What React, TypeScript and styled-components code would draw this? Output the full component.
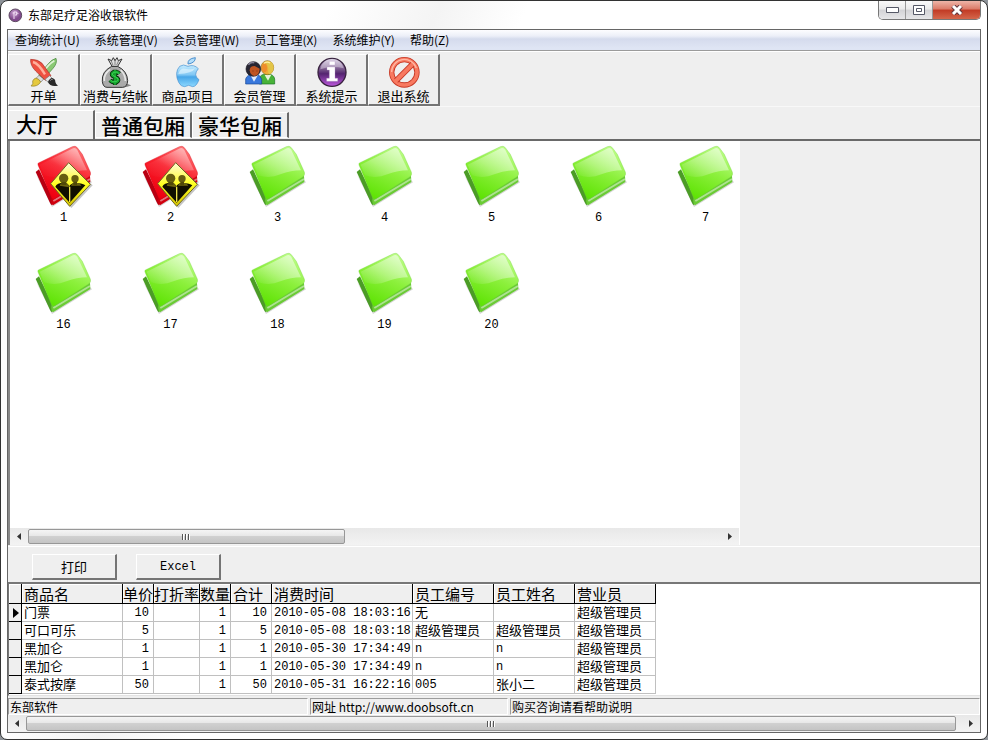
import React, { useState } from 'react';
import styled, { createGlobalStyle, css } from 'styled-components';

const sans = '"Noto Sans CJK SC", sans-serif';
const mono = '"Liberation Mono", "Noto Sans CJK SC", monospace';
const face = '#efefef';

const GlobalStyle = createGlobalStyle`
  * { box-sizing: border-box; }
  html, body { margin: 0; background: #8d9298; }
  body, button, table { font: 12px/16px ${sans}; color: #000; }
  button { padding: 0; margin: 0; border: 0; background: none; }
  svg { display: block; flex: none; }
`;

const Window = styled.div`
  display: flex;
  flex-direction: column;
  min-height: 100vh;
  padding: 0 6px 6px;
  border: 1px solid #333;
  border-radius: 8px 8px 7px 7px;
  background: linear-gradient(115deg, #fff 0 300px, #f4f4f4 400px, #fff 480px);
`;

const TitleBar = styled.header`
  display: flex;
  align-items: center;
  gap: 5px;
  height: 28px;
  padding-left: 1px;
`;

const Title = styled.h1`
  flex: 1;
  margin: 0;
  font-size: 12px;
  font-weight: 400;
`;

const Controls = styled.div`
  display: flex;
  align-self: flex-start;
  height: 19px;
  border: 1px solid #777;
  border-top: 0;
  border-radius: 0 0 5px 5px;
  overflow: hidden;
`;

const ControlButton = styled.button<{ $close?: boolean }>`
  display: flex;
  align-items: center;
  justify-content: center;
  width: ${p => (p.$close ? 47 : 27)}px;
  border-right: ${p => (p.$close ? 0 : '1px solid #999')};
  background: ${p =>
    p.$close
      ? 'linear-gradient(#eeb5a8, #db7a68 45%, #c13a24 50%, #d4674c)'
      : 'linear-gradient(#fafafa, #eaeaea 45%, #d3d3d6 50%, #e6e6e8)'};
`;

const Client = styled.div`
  flex: 1;
  display: flex;
  flex-direction: column;
  border: 1px solid #666;
  background: ${face};
`;

const MenuBar = styled.nav`
  display: flex;
  gap: 15px;
  height: 21px;
  padding-left: 7px;
  border-bottom: 1px solid #9b9b9b;
  background: linear-gradient(#fdfdff, #eceff8 30%, #d5dbed 45%, #dfe5f4 90%);
`;

const MenuItem = styled.button`
  white-space: nowrap;
`;

const ToolBar = styled.div`
  display: flex;
  height: 56px;
  padding-top: 1px;
  border-top: 1px solid #fff;
  border-bottom: 1px solid #f8f8f8;
`;

const ToolButton = styled.button`
  display: flex;
  flex-direction: column;
  align-items: center;
  justify-content: flex-end;
  width: 72px;
  margin-top: 1px;
  border: 1px solid #fff;
  border-right: 2px solid #747474;
  border-bottom: 2px solid #747474;
  font-size: 13px;
  line-height: 16px;
  white-space: nowrap;
`;

const Tabs = styled.div`
  display: flex;
  align-items: flex-end;
  height: 34px;
  padding-top: 3px;
  border-bottom: 2px solid #696969;
`;

const Tab = styled.button<{ $active: boolean }>`
  height: ${p => (p.$active ? 29 : 26)}px;
  padding: 0 ${p => (p.$active ? 35 : 5)}px 0 ${p => (p.$active ? 7 : 5)}px;
  border-left: 1px solid #fff;
  border-top: 1px solid #fff;
  border-right: 2px solid #696969;
  font-size: 21px;
  font-weight: 500;
  line-height: ${p => (p.$active ? 24 : 22)}px;
  white-space: nowrap;
  ${p => p.$active && css`padding-bottom: 4px;`}
  ${p => !p.$active && css`border-bottom: 1px solid #fff; margin-bottom: 1px;`}
`;

const Workspace = styled.main`
  flex: 1;
  display: grid;
  grid-template-columns: minmax(0, 1fr) 240px;
  border-bottom: 1px solid #fff;
`;

const RoomList = styled.section`
  display: flex;
  flex-direction: column;
  margin-bottom: 1px;
  border-left: 2px solid #8a8a8a;
  border-right: 1px solid #fff;
  background: #fff;
`;

const Rooms = styled.div`
  flex: 1;
  display: flex;
  flex-direction: column;
  overflow: hidden;
`;

const RoomRow = styled.div`
  display: flex;
  height: 107px;
  padding-top: 4px;
`;

const Room = styled.button`
  display: flex;
  flex: none;
  flex-direction: column;
  align-items: center;
  gap: 1px;
  width: 107px;
  font: 12px/16px ${mono};
`;

const ScrollBar = styled.div`
  display: flex;
  height: 17px;
  background: linear-gradient(#e8e8e8, #f3f3f3);
`;

const Arrow = styled.button`
  display: flex;
  align-items: center;
  justify-content: center;
  width: 18px;
`;

const Thumb = styled.div<{ $share: number }>`
  display: flex;
  flex: ${p => p.$share};
  align-items: center;
  justify-content: center;
  margin: 1px 0;
  border: 1px solid #979797;
  border-radius: 2px;
  background: linear-gradient(#f5f5f5, #e7e7e7 45%, #d0d0d0 50%, #c4c4c4);
`;

const Track = styled.div<{ $share: number }>`
  flex: ${p => p.$share};
`;

const Actions = styled.div`
  display: flex;
  gap: 19px;
  height: 35px;
  padding: 7px 24px 2px;
`;

const ActionButton = styled.button<{ $mono?: boolean }>`
  width: 85px;
  border: 1px solid #fff;
  border-right: 2px solid #747474;
  border-bottom: 2px solid #747474;
  font-family: ${p => (p.$mono ? mono : sans)};
  font-size: ${p => (p.$mono ? 12 : 13)}px;
`;

const GridPanel = styled.section`
  height: 114px;
  border-top: 2px solid #777;
  border-left: 1px solid #777;
  border-bottom: 1px solid #e3e3e3;
  background: #fff;
  overflow: hidden;
`;

const Grid = styled.table`
  width: 647px;
  table-layout: fixed;
  border-collapse: separate;
  border-spacing: 0;
`;

const Col = styled.col<{ $w: number }>`
  width: ${p => p.$w}px;
`;

const HeadCell = styled.th<{ $tight?: boolean }>`
  height: 20px;
  padding: 0 0 0 ${p => (p.$tight ? 0 : 2)}px;
  border-right: 1px solid #000;
  border-bottom: 1px solid #000;
  background: ${face};
  box-shadow: inset 1px 1px #fff;
  font-size: 15px;
  font-weight: 400;
  line-height: 18px;
  text-align: left;
  white-space: nowrap;
`;

const Marker = styled.th`
  height: 18px;
  padding: 0 0 0 4px;
  border-right: 1px solid #000;
  border-bottom: 1px solid #000;
  background: ${face};
`;

const Cell = styled.td<{ $right?: boolean; $mono?: boolean }>`
  height: 18px;
  padding: ${p => (p.$mono ? 2 : 0)}px ${p => (p.$right ? 4 : 0)}px ${p => (p.$mono ? 0 : 2)}px 2px;
  border-right: 1px solid #c0c0c0;
  border-bottom: 1px solid #c0c0c0;
  font-family: ${p => (p.$mono ? mono : sans)};
  font-size: ${p => (p.$mono ? 12 : 13)}px;
  line-height: 15px;
  text-align: ${p => (p.$right ? 'right' : 'left')};
  vertical-align: top;
  white-space: nowrap;
`;

const StatusBar = styled.footer`
  display: grid;
  grid-template-columns: 300px 198px 1fr;
  gap: 2px;
  height: 19px;
  padding-top: 2px;
`;

const StatusPane = styled.div`
  padding-left: 1px;
  border-top: 1px solid #9c9c9c;
  border-left: 1px solid #9c9c9c;
  border-right: 1px solid #fff;
  border-bottom: 1px solid #fff;
  line-height: 15px;
  white-space: nowrap;
`;

const AppIcon = () => (
  <svg width="15" height="15" viewBox="0 0 45 45" aria-hidden="true">
    <defs>
      <radialGradient id="app" cx=".4" cy=".3">
        <stop offset="0" stopColor="#c9a0d0" />
        <stop offset="1" stopColor="#814a8d" />
      </radialGradient>
    </defs>
    <circle cx="22" cy="22" r="19" fill="url(#app)" stroke="#5d4a61" strokeWidth="3" />
    <path d="M18 33V12h8v9h-5M14 15h5M26 13l5 5" fill="none" stroke="#f3dff5" strokeWidth="3" />
  </svg>
);

const BrushIcon = () => (
  <svg width="30" height="32" viewBox="87 168 90 96" aria-hidden="true">
    <path d="M168 175q5 14-9 30l-28 32-15-11 29-35q9-12 23-16z" fill="#8ac974" stroke="#3c8030" strokeWidth="2" />
    <path d="M163 182q-20 12-32 34" fill="none" stroke="#dff3d6" strokeWidth="5" />
    <path d="m117 226 14 11-8 9-15-11z" fill="#ddd" stroke="#777" strokeWidth="2" />
    <path d="M108 234q10 3 14 12-9 15-29 12 8-6 5-15 3-7 10-9z" fill="#e5c93e" stroke="#917d21" strokeWidth="2" />
    <path d="M92 178q23 0 34 12l27 37-17 14-29-28q-17-17-15-35z" fill="#ee5141" stroke="#a92c23" strokeWidth="2" />
    <path d="M99 186q16 4 36 37" fill="none" stroke="#ffb09c" strokeWidth="7" />
    <path d="m135 238 14-11 8 8-12 12z" fill="#e5e5e5" stroke="#777" strokeWidth="2" />
    <path d="M144 246q4-11 13-12 10 3 9 12 2 8 8 11-24 5-30-11z" fill="#292929" />
    <path d="M151 242q2-5 7-4" fill="none" stroke="#999" strokeWidth="3" />
  </svg>
);

const MoneyIcon = () => (
  <svg width="30" height="32" viewBox="303 168 90 96" aria-hidden="true">
    <path d="M350 257q23-13 44-1-14 7-37 6z" fill="#888" />
    <path d="M335 199q-31 16-28 45 2 18 14 18h47q14-1 15-20-1-29-30-43z" fill="#aaa" stroke="#333" strokeWidth="3" />
    <path d="M330 208q-20 15-17 35M362 210q15 15 14 33" fill="none" stroke="#e8e8e8" strokeWidth="5" />
    <path d="m324 177 12 22h17l13-22-11 5-4-9-6 9-5-9-5 9z" fill="#ddd" stroke="#333" strokeWidth="3" />
    <path d="m333 181 6 15M345 180v15M356 182l-6 13" stroke="#555" strokeWidth="2" />
    <path d="M358 221q-7-8-18-4-8 5-1 11l12 6q8 7-1 12-12 3-20-5M345 209v46" fill="none" stroke="#042c0a" strokeWidth="13" />
    <path d="M358 221q-7-8-18-4-8 5-1 11l12 6q8 7-1 12-12 3-20-5M345 210v44" fill="none" stroke="#17a62f" strokeWidth="8" />
    <path d="M357 221q-7-7-16-4-8 5-1 10l11 6q7 6-2 12-11 2-17-4" fill="none" stroke="#48e263" strokeWidth="2" />
  </svg>
);

const AppleIcon = () => (
  <svg width="30" height="32" viewBox="518 168 90 96" aria-hidden="true">
    <defs>
      <linearGradient id="apple" x2="0" y2="1">
        <stop offset="0" stopColor="#c6ecff" />
        <stop offset=".45" stopColor="#80c7f4" />
        <stop offset=".55" stopColor="#47a6e8" />
        <stop offset="1" stopColor="#8ed9ff" />
      </linearGradient>
    </defs>
    <path d="M563 192q-2-16 22-19 0 16-22 19z" fill="#b5dffb" stroke="#4a90cf" strokeWidth="3" />
    <path d="M563 199q-14-8-25 0-17 19-3 48 7 14 18 13l12-4 12 4q11 0 19-21-19-13-2-33-13-14-31-7z" fill="url(#apple)" stroke="#4790cf" strokeWidth="2" />
    <path d="M534 222q6-22 25-15 17 2 25-2-8 16-50 17z" fill="#e9f9ff" opacity=".6" />
  </svg>
);

const MembersIcon = () => (
  <svg width="32" height="32" viewBox="70 168 96 96" aria-hidden="true">
    <path d="M116 252v-17q3-13 24-14 20 2 22 16v15z" fill="#48b338" stroke="#167023" strokeWidth="2" />
    <path d="m132 225 10 17 10-18z" fill="#e6f3db" />
    <ellipse cx="140" cy="203" rx="19" ry="21" fill="#edab37" stroke="#93701d" strokeWidth="2" />
    <path d="M133 185q25-6 26 18-1 16-13 20-6-5-3-16l-3-12z" fill="#e3c547" />
    <ellipse cx="131" cy="204" rx="8" ry="13" fill="#ef8d2c" />
    <path d="M130 190q9-7 18-1" fill="none" stroke="#fff1a2" strokeWidth="4" />
    <path d="M75 252v-15q4-14 24-15 20 1 24 16v14z" fill="#3978dc" stroke="#174692" strokeWidth="2" />
    <path d="m89 225 11 20 12-20z" fill="#e4ecfb" />
    <ellipse cx="98" cy="207" rx="22" ry="22" fill="#272532" stroke="#16141d" strokeWidth="2" />
    <path d="M87 211q0-13 15-13l15 8q-1 19-15 22-13-1-15-17z" fill="#bf5421" />
    <path d="M83 194q7-9 18-6" fill="none" stroke="#858295" strokeWidth="5" />
    <path d="M96 213h2M108 213h2" stroke="#59200c" strokeWidth="3" />
  </svg>
);

const InfoIcon = () => (
  <svg width="32" height="32" viewBox="287 168 96 96" aria-hidden="true">
    <defs>
      <linearGradient id="info" x2="0" y2="1">
        <stop offset="0" stopColor="#d2c5df" />
        <stop offset=".4" stopColor="#765489" />
        <stop offset=".55" stopColor="#542470" />
        <stop offset="1" stopColor="#bd58de" />
      </linearGradient>
    </defs>
    <circle cx="335" cy="217" r="42" fill="url(#info)" stroke="#38233f" strokeWidth="4" />
    <path d="M300 208q7-32 36-32 28 2 34 29-35-9-70 3z" fill="#fff" opacity=".35" />
    <path d="M327 184h17v11h-17zM320 201h24v34h8v9h-33v-9h8v-25h-7z" fill="#fff" stroke="#b99bcb" strokeWidth="1" />
  </svg>
);

const ExitIcon = () => (
  <svg width="32" height="32" viewBox="504 168 96 96" aria-hidden="true">
    <circle cx="553" cy="217" r="38" fill="none" stroke="#c63825" strokeWidth="16" />
    <circle cx="553" cy="217" r="38" fill="none" stroke="#f87960" strokeWidth="11" />
    <path d="m528 242 50-50" stroke="#c63825" strokeWidth="17" />
    <path d="m526 244 54-54" stroke="#f87960" strokeWidth="12" />
    <path d="M515 216a38 38 0 0 1 74-12" fill="none" stroke="#ffb8a5" strokeWidth="4" />
  </svg>
);

const FolderIcon = ({ busy }: { busy: boolean }) => {
  const id = busy ? 'busy' : 'free';
  const [light, mid, full, back, edge] = busy
    ? ['#ff7d7d', '#f91f2c', '#ee0010', '#b80012', '#d0000e']
    : ['#c4ff94', '#8cf03c', '#5fe305', '#4b9c26', '#6acb35'];
  return (
    <svg width="60" height="64" viewBox="-5 -1 180 192" aria-hidden="true">
      <defs>
        <linearGradient id={`face-${id}`} x1=".85" y1="0" x2=".35" y2="1">
          <stop offset="0" stopColor={light} />
          <stop offset=".5" stopColor={mid} />
          <stop offset="1" stopColor={full} />
        </linearGradient>
        <linearGradient id={`shine-${id}`} x1="1" y1="0" x2="0" y2="1">
          <stop offset="0" stopColor="#fff" stopOpacity=".6" />
          <stop offset=".6" stopColor="#fff" stopOpacity={busy ? 0.08 : 0.3} />
          <stop offset="1" stopColor="#fff" stopOpacity="0" />
        </linearGradient>
        <linearGradient id="sign" x2="0" y2="1">
          <stop offset="0" stopColor="#fffbd8" />
          <stop offset=".5" stopColor="#ffff20" />
          <stop offset="1" stopColor="#d5c300" />
        </linearGradient>
      </defs>
      <path d="m2 90 47 95 120-74-8-10-108 67z" fill="#777" opacity=".3" />
      <path d="m0 80 10-8 43 90-4 18q-4-2-7-9z" fill={back} />
      <path d="m48 154 115-63 1 19-112 70q-8-5-4-26z" fill={edge} />
      <path d="m53 167 110-66" stroke="#fff" strokeOpacity=".45" strokeWidth="6" />
      <path d="M7 59q-2-6 3-7L110 4q9-4 15 3l15 20 24 53q3 10-5 15L57 160q-7 4-10-4z" fill={`url(#face-${id})`} stroke={edge} strokeWidth="1" />
      <path d="M12 58 112 9q8-3 13 5l29 61q-29 0-62 12-32 14-67 3z" fill={`url(#shine-${id})`} />
      {busy && (
        <g>
          <path d="m103 55 68 65-64 68-57-65z" fill="#555" opacity=".35" />
          <path d="m99 52 65 65-62 66-57-68z" fill="url(#sign)" stroke="#6f6920" strokeWidth="3" strokeLinejoin="round" />
          <path d="M59 124q4-12 27-12 14 1 14 13 4-11 18-12 20 0 31 7l-47 52z" fill="#111000" />
          <path d="M72 121q1-8 15-9 12 1 13 14zM106 121q3-9 14-9 13 1 17 9z" fill="#6a620e" />
          <circle cx="84" cy="99" r="14" fill="#665e10" />
          <circle cx="118" cy="100" r="11" fill="#665e10" />
          <path d="M77 110h15v9H77zM113 109h11v10h-11z" fill="#504908" />
          <path d="M102 124v46" stroke="#eee34c" strokeWidth="4" />
        </g>
      )}
    </svg>
  );
};

const Chevron = ({ left }: { left?: boolean }) => (
  <svg width="4" height="7" viewBox="0 0 8 14" aria-hidden="true">
    <path d={left ? 'M8 0v14L0 7z' : 'M0 0v14l8-7z'} fill="#333" />
  </svg>
);

const Grip = () => (
  <svg width="8" height="6" viewBox="0 0 8 6" aria-hidden="true">
    <path d="M0 0h1v6H0zM3 0h1v6H3zM6 0h1v6H6z" fill="#555" />
    <path d="M1 0h1v6H1zM4 0h1v6H4zM7 0h1v6H7z" fill="#fff" />
  </svg>
);

const HorizontalScroll = ({ thumb, rest, controls }: { thumb: number; rest: number; controls: string }) => (
  <ScrollBar role="scrollbar" aria-orientation="horizontal" aria-valuenow={0} aria-controls={controls}>
    <Arrow aria-label="向左"><Chevron left /></Arrow>
    <Thumb $share={thumb}><Grip /></Thumb>
    <Track $share={rest} />
    <Arrow aria-label="向右"><Chevron /></Arrow>
  </ScrollBar>
);

const menus = ['查询统计(U)', '系统管理(V)', '会员管理(W)', '员工管理(X)', '系统维护(Y)', '帮助(Z)'];

const tools = [
  { label: '开单', Icon: BrushIcon },
  { label: '消费与结帐', Icon: MoneyIcon },
  { label: '商品项目', Icon: AppleIcon },
  { label: '会员管理', Icon: MembersIcon },
  { label: '系统提示', Icon: InfoIcon },
  { label: '退出系统', Icon: ExitIcon },
];

const halls = ['大厅', '普通包厢', '豪华包厢'];
const roomRows = [[1, 2, 3, 4, 5, 6, 7], [16, 17, 18, 19, 20]];
const occupied = [1, 2];

const columns = [
  { name: '商品名', width: 101 },
  { name: '单价', width: 31, tight: true },
  { name: '打折率', width: 46, tight: true },
  { name: '数量', width: 31, tight: true },
  { name: '合计', width: 41 },
  { name: '消费时间', width: 141 },
  { name: '员工编号', width: 81 },
  { name: '员工姓名', width: 81 },
  { name: '营业员', width: 81 },
];
const numeric = [1, 2, 3, 4];

const sales = [
  ['门票', '10', '', '1', '10', '2010-05-08 18:03:16', '无', '', '超级管理员'],
  ['可口可乐', '5', '', '1', '5', '2010-05-08 18:03:18', '超级管理员', '超级管理员', '超级管理员'],
  ['黑加仑', '1', '', '1', '1', '2010-05-30 17:34:49', 'n', 'n', '超级管理员'],
  ['黑加仑', '1', '', '1', '1', '2010-05-30 17:34:49', 'n', 'n', '超级管理员'],
  ['泰式按摩', '50', '', '1', '50', '2010-05-31 16:22:16', '005', '张小二', '超级管理员'],
];

const isLatin = (text: string) => /^[\x20-\x7e]*$/.test(text);

export default function App() {
  const [hall, setHall] = useState(0);
  return (
    <>
      <GlobalStyle />
      <Window>
        <TitleBar>
          <AppIcon />
          <Title>东部足疗足浴收银软件</Title>
          <Controls>
            <ControlButton aria-label="最小化">
              <svg width="13" height="6" viewBox="0 0 26 12"><path d="M1 1h24v10H1z" fill="#fff" stroke="#555866" strokeWidth="2" /></svg>
            </ControlButton>
            <ControlButton aria-label="最大化">
              <svg width="12" height="10" viewBox="0 0 24 20"><path d="M1 1h22v18H1zM7 7h10v6H7z" fill="#fff" stroke="#555866" strokeWidth="2" /></svg>
            </ControlButton>
            <ControlButton $close aria-label="关闭">
              <svg width="12" height="10" viewBox="0 0 12 10">
                <path d="m2 1 8 8M10 1 2 9" stroke="#63363c" strokeWidth="5" />
                <path d="m2 1 8 8M10 1 2 9" stroke="#fff" strokeWidth="3" />
              </svg>
            </ControlButton>
          </Controls>
        </TitleBar>
        <Client>
          <MenuBar>
            {menus.map(name => <MenuItem key={name}>{name}</MenuItem>)}
          </MenuBar>
          <ToolBar role="toolbar">
            {tools.map(({ label, Icon }) => (
              <ToolButton key={label}><Icon />{label}</ToolButton>
            ))}
          </ToolBar>
          <Tabs role="tablist">
            {halls.map((name, i) => (
              <Tab key={name} role="tab" aria-selected={i === hall} $active={i === hall} onClick={() => setHall(i)}>{name}</Tab>
            ))}
          </Tabs>
          <Workspace>
            <RoomList>
              <Rooms id="rooms">
                {roomRows.map(row => (
                  <RoomRow key={row[0]}>
                    {row.map(no => (
                      <Room key={no}><FolderIcon busy={occupied.includes(no)} />{no}</Room>
                    ))}
                  </RoomRow>
                ))}
              </Rooms>
              <HorizontalScroll thumb={316} rest={378} controls="rooms" />
            </RoomList>
          </Workspace>
          <Actions>
            <ActionButton>打印</ActionButton>
            <ActionButton $mono>Excel</ActionButton>
          </Actions>
          <GridPanel id="sales">
            <Grid>
              <colgroup>
                <Col $w={13} />
                {columns.map(c => <Col key={c.name} $w={c.width} />)}
              </colgroup>
              <thead>
                <tr>
                  <HeadCell />
                  {columns.map(c => <HeadCell key={c.name} scope="col" $tight={c.tight}>{c.name}</HeadCell>)}
                </tr>
              </thead>
              <tbody>
                {sales.map((row, r) => (
                  <tr key={r}>
                    <Marker>
                      {r === 0 && <svg width="6" height="10" viewBox="0 0 6 10"><path d="M0 0v10l6-5z" /></svg>}
                    </Marker>
                    {row.map((text, c) => (
                      <Cell key={c} $right={numeric.includes(c)} $mono={isLatin(text)}>{text}</Cell>
                    ))}
                  </tr>
                ))}
              </tbody>
            </Grid>
          </GridPanel>
          <StatusBar>
            <StatusPane>东部软件</StatusPane>
            <StatusPane>网址 http://www.doobsoft.cn</StatusPane>
            <StatusPane>购买咨询请看帮助说明</StatusPane>
          </StatusBar>
          <HorizontalScroll thumb={930} rest={6} controls="sales" />
        </Client>
      </Window>
    </>
  );
}
